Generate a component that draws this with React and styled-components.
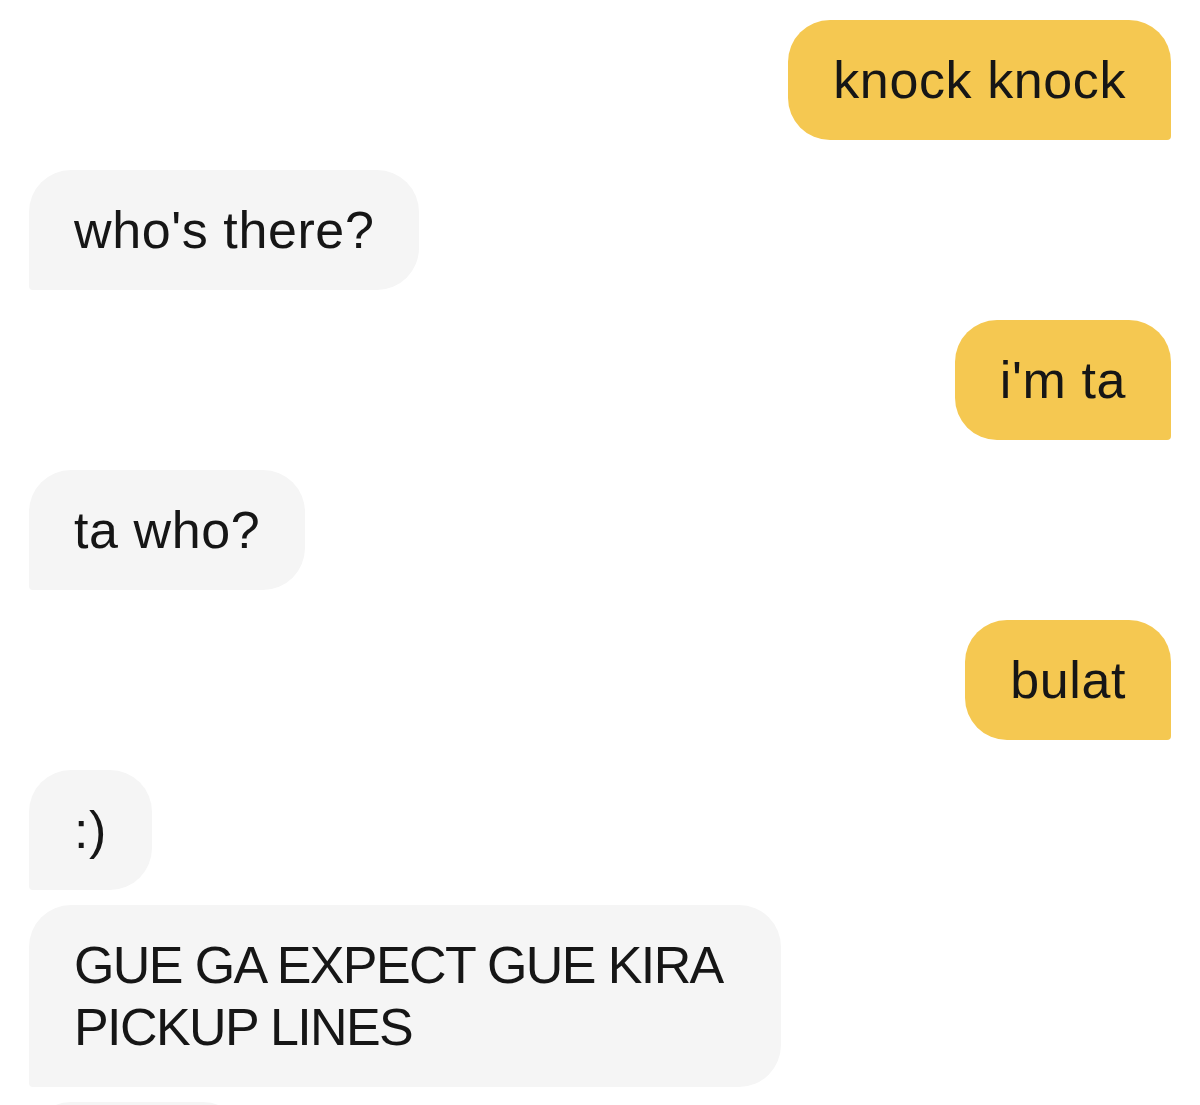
import React from 'react';
import styled, { createGlobalStyle } from 'styled-components';

const GlobalStyle = createGlobalStyle`
  html, body {
    margin: 0;
    padding: 0;
    background: #ffffff;
  }
  body {
    font-family: "Liberation Sans", Arial, sans-serif;
    overflow: hidden;
  }
`;

const messages = [
  { id: 1, mine: true, text: 'knock knock' },
  { id: 2, mine: false, text: "who's there?" },
  { id: 3, mine: true, text: "i'm ta" },
  { id: 4, mine: false, text: 'ta who?' },
  { id: 5, mine: true, text: 'bulat' },
  { id: 6, mine: false, text: ':)' },
  { id: 7, mine: false, text: 'GUE GA EXPECT GUE KIRA PICKUP LINES' },
  { id: 8, mine: false, text: '', width: 216 },
];

const isShouting = (text) => /[A-Z]/.test(text) && text === text.toUpperCase();

export default function App() {
  return (
    <>
      <GlobalStyle />
      <Thread>
        {messages.map((m, i) => {
          const prev = messages[i - 1];
          const grouped = prev && prev.mine === m.mine;
          return (
            <Row key={m.id} $mine={m.mine} $grouped={grouped} $first={i === 0}>
              <Bubble
                $mine={m.mine}
                $caps={isShouting(m.text)}
                style={m.width ? { width: m.width } : undefined}
              >
                {m.text}
              </Bubble>
            </Row>
          );
        })}
      </Thread>
    </>
  );
}

const Thread = styled.div`
  display: flex;
  flex-direction: column;
  padding: 20px 29px 0;
`;

const Row = styled.div`
  display: flex;
  justify-content: ${(p) => (p.$mine ? 'flex-end' : 'flex-start')};
  margin-top: ${(p) => (p.$first ? 0 : p.$grouped ? 15 : 30)}px;
`;

const Bubble = styled.div`
  box-sizing: border-box;
  max-width: 752px;
  min-height: 120px;
  padding: 29px 45px;
  font-size: 52px;
  line-height: 62px;
  letter-spacing: ${(p) => (p.$caps ? '-1.6px' : '0.6px')};
  color: #161616;
  background: ${(p) => (p.$mine ? '#f5c851' : '#f5f5f5')};
  border-radius: ${(p) => (p.$mine ? '42px 42px 4px 42px' : '42px 42px 42px 4px')};
`;
